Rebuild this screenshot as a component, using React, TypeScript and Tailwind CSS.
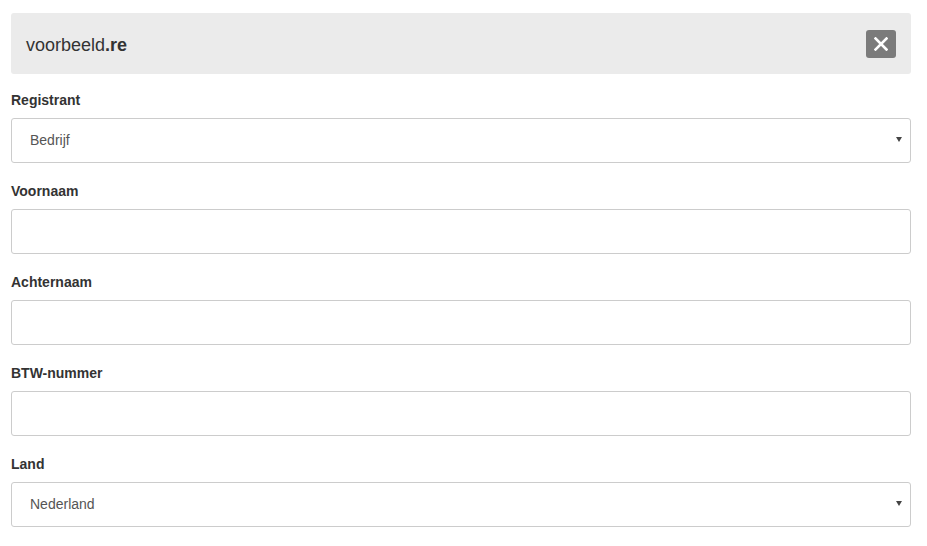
import React from "react";

function Field({ label, value, select }: { label: string; value?: string; select?: boolean }) {
  return (
    <div className="flex flex-col">
      <label className="block h-5 leading-5 text-[14px] font-bold text-[#333] mb-2">{label}</label>
      <div className="relative h-[45px] border border-[#cccccc] rounded-[3px] bg-white flex items-center pl-[18px] pr-3">
        {value && <span className="text-[14px] text-[#555]">{value}</span>}
        {select && (
          <svg className="absolute right-[8px] top-[18px]" width="6" height="5" viewBox="0 0 6 5">
            <path d="M0 0 L6 0 L3 5 Z" fill="#444" />
          </svg>
        )}
      </div>
    </div>
  );
}

export default function App() {
  return (
    <div className="w-[927px] h-[546px] bg-white overflow-hidden" style={{ fontFamily: '"Liberation Sans", Arial, sans-serif' }}>
      <div className="pl-[11px] pr-[16px] pt-[13px]">
        <div className="h-[61px] bg-[#ebebeb] rounded-[3px] flex items-center justify-between pl-[15px] pr-[15px]">
          <span className="text-[18px] leading-6 text-[#333] pt-[2px]">
            voorbeeld<span className="font-bold">.re</span>
          </span>
          <div className="w-[30px] h-[28px] bg-[#7b7b7b] rounded-[3px] flex items-center justify-center">
            <svg width="14" height="14" viewBox="0 0 14 14">
              <path d="M1.5 1.5 L12.5 12.5 M12.5 1.5 L1.5 12.5" stroke="#fff" strokeWidth="2.6" strokeLinecap="square" />
            </svg>
          </div>
        </div>
        <div className="mt-[16px] flex flex-col gap-[18px]">
          <Field label="Registrant" value="Bedrijf" select />
          <Field label="Voornaam" />
          <Field label="Achternaam" />
          <Field label="BTW-nummer" />
          <Field label="Land" value="Nederland" select />
        </div>
      </div>
    </div>
  );
}
